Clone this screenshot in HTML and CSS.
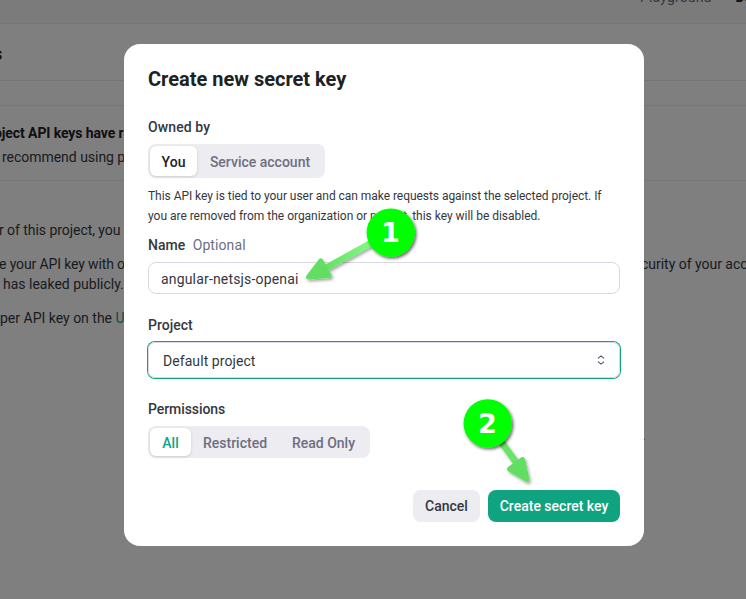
FILE: index.html
```
<!DOCTYPE html>
<html lang="en">
<head>
<meta charset="utf-8">
<title>Create new secret key</title>
<link rel="stylesheet" href="styles.css">
</head>
<body>
<div class="page">
  <header class="topbar"><span>Playground</span><b>Dashboard</b></header>
  <div class="page-title">s</div>
  <section class="notice">
    <div class="notice-title">oject API keys have re</div>
    <div class="notice-text">recommend using p</div>
  </section>
  <main class="copy">
    <p class="line-owner">r of this project, you c</p>
    <p class="line-share"><span>e your API key with o</span><span class="share-end">curity of your account</span></p>
    <p class="line-leak">has leaked publicly.</p>
    <p class="line-usage">per API key on the <a>U</a></p>
    <p class="line-end">.</p>
  </main>
</div>
<div class="overlay">
  <div class="modal">
    <h1>Create new secret key</h1>
    <div class="label owned">Owned by</div>
    <div class="segments segments-owner">
      <button class="segment active">You</button><button class="segment service">Service account</button>
    </div>
    <p class="hint"><span class="hint-a">This API key is tied to your user and can make requests against the selected project. If</span><br><span class="hint-b">you are removed from the organization or project, this key will be disabled.</span></p>
    <div class="label name">Name <span class="optional">Optional</span></div>
    <div class="input">angular-netsjs-openai</div>
    <div class="label project">Project</div>
    <div class="select"><span>Default project</span>
      <svg width="8" height="10" viewBox="0 0 8 10"><path d="M1.3 3.2 4 .9l2.7 2.3M1.3 6.8 4 9.1l2.7-2.3" fill="none" stroke="#565668" stroke-width="1.1" stroke-linecap="round" stroke-linejoin="round"/></svg>
    </div>
    <div class="label permissions">Permissions</div>
    <div class="segments segments-permissions">
      <button class="segment active all">All</button><button class="segment restricted">Restricted</button><button class="segment readonly">Read Only</button>
    </div>
    <div class="actions"><button class="cancel">Cancel</button><button class="create">Create secret key</button></div>
  </div>
</div>
<svg class="callouts" width="746" height="599" viewBox="0 0 746 599">
  <defs>
    <filter id="shadow" x="-30%" y="-30%" width="160%" height="160%"><feDropShadow dx="1.5" dy="1.8" stdDeviation="1.6" flood-color="#000" flood-opacity=".6"/></filter>
    <filter id="soft" x="-30%" y="-30%" width="160%" height="160%"><feDropShadow dx="1.5" dy="2" stdDeviation="1.5" flood-color="#000" flood-opacity=".35"/></filter>
    <linearGradient id="g1" gradientUnits="userSpaceOnUse" x1="372" y1="240" x2="320" y2="270"><stop stop-color="#80fc80"/><stop offset="1" stop-color="#62de62"/></linearGradient>
  </defs>
  <g filter="url(#soft)" stroke-linejoin="round">
    <path d="M380 238 322 270" stroke="url(#g1)" stroke-width="6.4"/>
    <path d="M308.5 277 320.7 261 329 275.500Z" fill="#62de62" stroke="#62de62" stroke-width="5"/>
    <path d="M494 432 518 465" stroke="#67e567" stroke-width="6.400"/>
    <path d="M527 479.500 522.500 459.500 509.500 469Z" fill="#62de62" stroke="#62de62" stroke-width="5"/>
  </g>
  <g filter="url(#shadow)" fill="#0f0"><circle cx="390.800" cy="232.600" r="24.200"/><circle cx="487.700" cy="423.400" r="24.200"/></g>
  <g class="callout-number"><text x="390.500" y="242">1</text><text x="487.500" y="433">2</text></g>
</svg>
</body>
</html>
```
FILE: styles.css
```
* { box-sizing: border-box; }
body { margin: 0; width: 746px; height: 599px; overflow: hidden; font-family: Roboto, "Liberation Sans", sans-serif; font-size: 14px; line-height: 20px; color: #353740; background: #fff; }
.page { height: 599px; overflow: hidden; white-space: nowrap; }
.topbar { height: 24px; padding-left: 640px; display: flex; gap: 24px; background: #f7f7f8; border-bottom: 1px solid #ececf1; color: #6e6e80; line-height: 0; letter-spacing: .15px; }
.topbar span, .topbar b { margin-top: -3px; }
.topbar b { color: #202123; }
.page-title { height: 57px; border-bottom: 1px solid #ececf1; padding-top: 20px; text-indent: -7px; font-size: 18px; font-weight: 700; color: #202123; }
.notice { height: 76px; margin-top: 24px; padding-top: 17px; border-top: 1px solid #ececf1; border-bottom: 1px solid #ececf1; }
.notice-title { height: 24px; text-indent: -6px; font-weight: 700; color: #202123; letter-spacing: -.09px; }
.notice-text { padding-left: 2px; letter-spacing: -.03px; }
.copy p { margin: 0; }
.copy { padding-top: 39px; }
.line-owner { text-indent: -1px; letter-spacing: -.05px; }
.copy .line-share { margin-top: 14px; display: flex; }
.line-share span { flex: none; width: 642px; text-indent: -1px; letter-spacing: -.13px; }
.line-share .share-end { letter-spacing: -.02px; }
.line-leak { padding-left: 3px; }
.copy .line-usage { margin-top: 14px; }
.line-usage a { color: #10a37f; }
.copy .line-end { padding-left: 642px; margin-top: 97px; }
.overlay { position: absolute; inset: 0; background: rgba(0,0,0,.5); display: flex; flex-direction: column; align-items: center; padding: 44px 0 0 22px; }
.modal { width: 520px; height: 502px; padding: 23px 24px; border-radius: 16px; background: #fff; display: flex; flex-direction: column; white-space: nowrap; }
h1 { margin: 0; font-size: 20px; line-height: 24px; font-weight: 700; color: #202123; }
.label { font-weight: 500; line-height: 20px; }
.owned { margin-top: 26px; letter-spacing: .1px; }
.segments { align-self: flex-start; display: flex; padding: 2px; border-radius: 8px; background: #ececf1; }
.segments-owner { height: 34px; width: 177px; margin-top: 7px; }
.segments-permissions { height: 32px; width: 222px; margin-top: 7px; }
button { border: 0; padding: 0; font: inherit; font-weight: 500; }
.segment { padding-top: 2px; background: transparent; color: #6e6e80; border-radius: 6px; white-space: nowrap; }
.segment.active { width: 47px; background: #fff; color: #202123; box-shadow: 0 1px 3px rgba(0,0,0,.14); }
.segment.service { flex: 1; }
.segment.active.all { width: 41px; color: #10a37f; }
.restricted { width: 88px; }
.readonly { flex: 1; }
.hint { margin: 8px 0 0; font-size: 12px; }
.hint-a { letter-spacing: -.045px; }
.hint-b { letter-spacing: -.02px; }
.name { margin-top: 9px; }
.optional { margin-left: 4px; font-weight: 400; color: #6e6e80; letter-spacing: .1px; }
.input { height: 32px; margin-top: 7px; padding: 6px 12px; border: 1px solid #d9d9e3; border-radius: 8px; line-height: 20px; letter-spacing: .17px; }
.project { margin-top: 21px; }
.select { height: 36px; margin-top: 7px; padding: 0 14px; border: 1px solid #d9d9e3; border-radius: 7px; box-shadow: 0 0 0 1px #10a37f; display: flex; align-items: center; justify-content: space-between; }
.select span { padding-top: 2px; letter-spacing: .07px; }
.permissions { margin-top: 21px; letter-spacing: -.08px; }
.actions { margin-top: 32px; display: flex; justify-content: flex-end; gap: 8px; }
.actions button { height: 32px; border-radius: 8px; }
.actions .cancel { width: 67px; background: #ececf1; color: #353740; }
.actions .create { width: 132px; background: #10a37f; color: #fff; }
.callouts { position: absolute; left: 0; top: 0; pointer-events: none; }
.callout-number { fill: #fff; font: bold 27px "DejaVu Sans", sans-serif; text-anchor: middle; }
```
